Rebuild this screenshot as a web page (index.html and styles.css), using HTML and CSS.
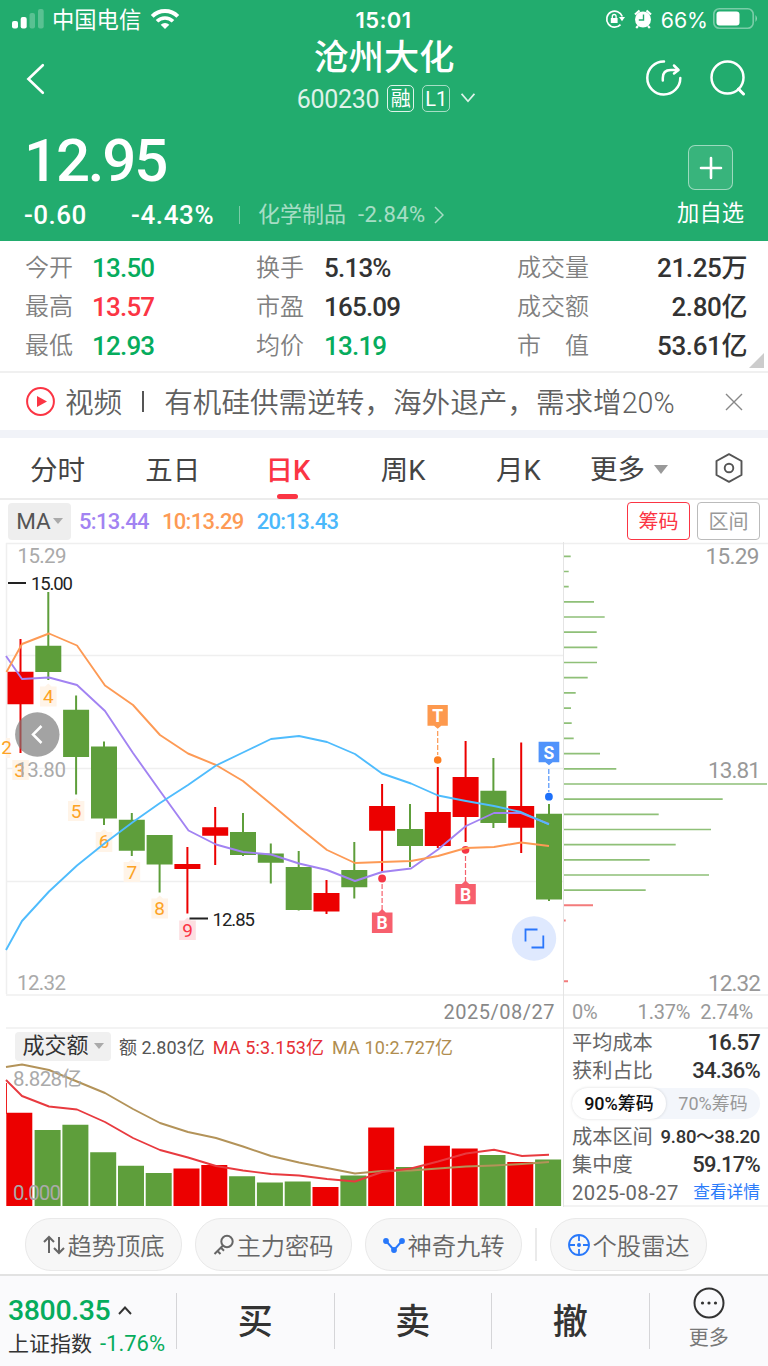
FILE: index.html
```
<!DOCTYPE html>
<html lang="zh-CN">
<head>
    <meta charset="UTF-8">
    <meta name="viewport" content="width=device-width, initial-scale=1.0">
    <title>沧州大化 600230</title>
    <link rel="stylesheet" href="styles.css">
</head>
<body>
    <header class="header">
        <div class="status">
            <div class="status-left">
                <svg width="32" height="20" viewBox="0 0 32 20" fill="#fff">
                    <rect x="0" y="12" width="6" height="7.5" rx="2"/>
                    <rect x="8.7" y="8" width="6" height="11.5" rx="2"/>
                    <rect x="17.5" y="4" width="5.5" height="15.5" rx="2" opacity=".25"/>
                    <rect x="26" y="0" width="5.7" height="19.5" rx="2" opacity=".25"/>
                </svg>
                <span class="carrier">中国电信</span>
                <svg width="30" height="22" viewBox="0 0 30 22" fill="none" stroke="#fff" stroke-width="4">
                    <path d="M2.2 8.3a18 18 0 0 1 25.6 0"/>
                    <path d="M7 13.3a11.3 11.3 0 0 1 16 0" stroke-width="3.6"/>
                    <path d="M15 21l-4.3-4.2a6.2 6.2 0 0 1 8.6 0z" fill="#fff" stroke="none"/>
                </svg>
            </div>
            <span class="clock">15:01</span>
            <div class="status-right">
                <svg width="20" height="20" viewBox="0 0 20 20" fill="none" stroke="#fff" stroke-width="1.7">
                    <path d="M17.3 7.5A8 8 0 1 0 15.5 15.7"/>
                    <path d="M14 8h6L17 12.2z" fill="#fff" stroke="none"/>
                    <path d="M5.8 9h6.8v5H5.8z" fill="#fff" stroke="none"/>
                    <path d="M7.3 9V7.4a1.9 1.9 0 0 1 3.8 0V9" stroke-width="1.3"/>
                </svg>
                <svg class="alarm" width="18" height="20" viewBox="0 0 18 20">
                    <circle cx="9" cy="10.5" r="8" fill="#fff"/>
                    <path d="M1 5.5L5.5 1.5M17 5.5L12.5 1.5M4 17l-1.8 2M14 17l1.8 2" stroke="#fff" stroke-width="2.2"/>
                    <path d="M9.5 5.5V11H4.8" stroke="#22ac6e" stroke-width="1.4" fill="none"/>
                </svg>
                <span class="percent">66%</span>
                <svg width="46" height="22" viewBox="0 0 46 22">
                    <rect x=".8" y=".8" width="39.4" height="19.4" rx="5.5" fill="none" stroke="#fff" stroke-opacity=".4" stroke-width="1.6"/>
                    <rect x="3.5" y="3.5" width="23" height="14" rx="3" fill="#fff"/>
                    <path d="M42.5 7q3 3.5 0 7z" fill="#fff" opacity=".5"/>
                </svg>
            </div>
        </div>

        <div class="nav">
            <svg class="back" width="20" height="32" viewBox="0 0 20 32" fill="none" stroke="#fff" stroke-width="2.6" stroke-linecap="round">
                <path d="M16.8 2.2L2.4 16l14.4 13.8" stroke-linejoin="miter"/>
            </svg>
            <div class="title">
                <h1>沧州大化</h1>
                <div class="code">
                    <span class="code-num">600230</span>
                    <span class="tag">融</span>
                    <span class="tag tag-dim">L1</span>
                    <svg width="14" height="10" viewBox="0 0 14 10" fill="none" stroke="#fff" stroke-opacity=".85" stroke-width="1.7">
                        <path d="M.6 .8L7 8.3L13.4 .8"/>
                    </svg>
                </div>
            </div>
            <div class="nav-icons">
                <svg width="36" height="36" viewBox="0 0 36 36" fill="none" stroke="#fff" stroke-width="2.5" stroke-linecap="round" stroke-linejoin="round">
                    <path d="M18 1.5A16.5 16.5 0 1 0 34.3 18"/>
                    <path d="M16.8 20.5V18q0-8 8-8H32"/>
                    <path d="M28 5.5l4.5 4.5-4.5 3.5"/>
                </svg>
                <svg width="36" height="36" viewBox="0 0 36 36" fill="none" stroke="#fff" stroke-width="2.5" stroke-linecap="round">
                    <circle cx="17.5" cy="17.5" r="16"/>
                    <path d="M28.5 29l5 5" stroke-width="3"/>
                </svg>
            </div>
        </div>

        <div class="quote">
            <div class="quote-main">
                <div class="price">12.95</div>
                <div class="changes">
                    <span class="change">-0.60</span>
                    <span class="change-rate">-4.43%</span>
                    <span class="sector">化学制品</span>
                    <span class="sector-rate">-2.84%</span>
                    <svg width="10" height="18" viewBox="0 0 10 18" fill="none" stroke="#fff" stroke-opacity=".6" stroke-width="1.5">
                        <path d="M1 1l8 8-8 8"/>
                    </svg>
                </div>
            </div>
            <div class="add">
                <div class="add-box">
                    <svg width="24" height="24" viewBox="0 0 24 24" stroke="#fff" stroke-width="2.6" stroke-linecap="round">
                        <path d="M12 2v20M2 12h20"/>
                    </svg>
                </div>
                <span>加自选</span>
            </div>
        </div>
    </header>

    <section class="stats">
        <span>今开</span><b class="green">13.50</b><span>换手</span><b>5.13%</b><span>成交量</span><b class="last">21.25万</b>
        <span>最高</span><b class="red">13.57</b><span>市盈</span><b>165.09</b><span>成交额</span><b class="last">2.80亿</b>
        <span>最低</span><b class="green">12.93</b><span>均价</span><b class="green">13.19</b><span>市　值</span><b class="last">53.61亿</b>
        <i class="corner"></i>
    </section>

    <section class="news">
        <svg width="29" height="29" viewBox="0 0 29 29">
            <circle cx="14.5" cy="14.5" r="13.4" fill="none" stroke="#fb3544" stroke-width="2"/>
            <path d="M11 9l10 5.5-10 5.5z" fill="#fb3544"/>
        </svg>
        <span class="news-type">视频</span>
        <i class="news-bar"></i>
        <span class="news-text">有机硅供需逆转，海外退产，需求增20%</span>
        <svg width="18" height="18" viewBox="0 0 18 18" stroke="#888" stroke-width="1.4">
            <path d="M1 1l16 16M17 1L1 17"/>
        </svg>
    </section>

    <nav class="tabs">
        <span class="tab">分时</span>
        <span class="tab">五日</span>
        <span class="tab active">日K</span>
        <span class="tab">周K</span>
        <span class="tab">月K</span>
        <span class="tab-more">更多<i class="caret"></i></span>
        <svg width="28" height="30" viewBox="0 0 28 30" fill="none" stroke="#555" stroke-width="1.9" stroke-linejoin="round">
            <path d="M14 1.2L26.5 8v14L14 28.8 1.5 22V8z"/>
            <circle cx="14" cy="15" r="4.3"/>
        </svg>
    </nav>

    <div class="ma-row">
        <span class="ma-select">MA<i class="caret small"></i></span>
        <span class="ma purple">5:13.44</span>
        <span class="ma orange">10:13.29</span>
        <span class="ma blue">20:13.43</span>
        <span class="btn btn-on">筹码</span>
        <span class="btn">区间</span>
    </div>

    <main class="charts">
        <div class="left">
            <!-- candles -->
            <svg class="kline" width="563" height="452" viewBox="0 542 563 452">
                <path class="grid" d="M6 543.5H563M6 655.5H563M6 768.5H563M6 881.5H563M6.5 543V994"/>
                <g class="axis">
                    <text x="17.5" y="563" textLength="49">15.29</text>
                    <text x="17" y="989.5" textLength="49">12.32</text>
                </g>
                <g class="nine">
                    <path d="M6 738h4v20h-4zM12.3 760h16.5v20h-16.5zM40 686.5h5l3.3-3 3.3 3h5v20H40zM68 801h5l3.2-3 3.2 3h5v20H68zM95.7 832h5l3.3-3 3.3 3h5v20H95.7zM123.6 862h5l3.3-3 3.3 3h5v20h-16.6zM151.4 898.5h5l3.3-3 3.3 3h5v20h-16.6z"/>
                    <path class="nine-last" d="M179.2 920.5h5l3.3-3 3.3 3h5v19.5h-16.6z"/>
                    <text x="6.5" y="754">2</text>
                    <text x="19.5" y="776.5">3</text>
                    <text x="48.3" y="703">4</text>
                    <text x="76.2" y="817.5">5</text>
                    <text x="104" y="848">6</text>
                    <text x="131.9" y="878.5">7</text>
                    <text x="159.6" y="915">8</text>
                    <text class="nine-red" x="187.5" y="936.5">9</text>
                </g>
                <g class="axis"><text x="16" y="776.5" textLength="50">13.80</text></g>

                <path class="wick up" d="M20.5 639V753M187.4 847V913.5M215.2 807V865M326.5 880V914M382.1 784V872M437.8 767V848M465.6 741V842M521.2 742.5V853"/>
                <path class="body up" d="M20.5 671.8V704.3M187.4 864V869M215.2 827.3V835.7M326.5 893V911.5M382.1 806V830.8M437.8 812V846M465.6 777V817M521.2 806V827.7"/>
                <path class="wick down" d="M48.3 592V680M76.1 695.5V794.5M104 741.5V825M131.8 813V856M159.6 835V892.5M243 813V856M270.8 843.5V883.5M298.7 851V910.5M354.3 842V898.5M410 804V867M493.4 758V828M549 804V901"/>
                <path class="body down" d="M48.3 645.8V672M76.1 709.7V757M104 746.5V818.5M131.8 819.8V850.7M159.6 835V864.5M243 832V855M270.8 853.5V862.8M298.7 867V910M354.3 870V887.3M410 829V846M493.4 790.7V823M549 813.7V899.5"/>

                <g class="signal">
                    <path d="M437.7 731V755" stroke="#fc964e"/>
                    <path d="M548.8 769V792" stroke="#5093fb"/>
                    <path d="M382.1 884V910M465.5 856V882" stroke="#f5606c"/>
                    <circle cx="437.7" cy="760" r="3.8" fill="#fc7d20"/>
                    <circle cx="548.9" cy="796.7" r="3.9" fill="#1d70fa"/>
                    <circle cx="382.1" cy="878.5" r="3.9" fill="#f53545"/>
                    <circle cx="465.5" cy="849.8" r="3.9" fill="#f53545"/>
                    <path d="M427.5 705h20.3v20.7h-6.5l-3.6 3-3.6-3h-6.6z" fill="#fd994e"/>
                    <path d="M538.6 741.7h20.7v20.6h-6.7l-3.6 3-3.6-3h-6.8z" fill="#5093fb"/>
                    <path d="M371.9 912.5h6.5l3.7-3.5 3.7 3.5h6.7V933h-20.6zM455.3 884h6.5l3.7-3.5 3.7 3.5h6.6v20.3h-20.5z" fill="#f75f6d"/>
                    <text x="437.7" y="721.5">T</text>
                    <text x="549" y="758.5">S</text>
                    <text x="382.2" y="929">B</text>
                    <text x="465.6" y="900.5">B</text>
                </g>

                <polyline class="line purple-line" points="6,656 22,679 49,677.5 77,685 105,711 133,753 160,791 188.5,830.5 216,844.5 243,852 271,854.5 299,863.5 327,870 355,881 382,872 411,868.5 438,849.5 466,826 494,813 521,813 549,824"/>
                <polyline class="line orange-line" points="6.5,672 22,644 49,633.5 77,645.5 105,685.5 133,705 160,735 188,753.5 216,765 243,781 271,804 299,827.5 327,850 355,863 382,862 411,861 438,856 466,848 494,847 521,842.5 549,846"/>
                <polyline class="line blue-line" points="6,950 22,921 49,891.5 77,865.5 105,843 133,822 160,803 188,785 216,765.5 243,752.5 271,739 299,736 327,742 355,754 382,773.5 411,783.5 438,795.5 466,801 494,806 521,812 549,824.5"/>

                <g class="extreme">
                    <path d="M8 583H26M189.5 918.5H208"/>
                    <text x="31" y="590" textLength="42">15.00</text>
                    <text x="212.5" y="925.5" textLength="42.5">12.85</text>
                </g>

                <circle cx="37.3" cy="734.5" r="22.2" fill="#777" fill-opacity=".68"/>
                <path d="M41.5 726L33 734.5l8.5 8.5" fill="none" stroke="#fff" stroke-width="2.5"/>
                <circle cx="534" cy="938.5" r="22.2" fill="#dfe9fe"/>
                <path d="M525.5 941.5V929.5H537.5M543.3 935.5V947.5H531.5" fill="none" stroke="#2a76fb" stroke-width="1.8"/>
            </svg>

            <div class="date-row">2025/08/27</div>

            <div class="vol-head">
                <span class="vol-select">成交额<i class="caret small"></i></span>
                <span class="vol-now">额 2.803亿</span>
                <span class="vol-ma5">MA 5:3.153亿</span>
                <span class="vol-ma10">MA 10:2.727亿</span>
            </div>

            <svg class="volume" width="563" height="144" viewBox="0 1063 563 144">
                <path class="body up" d="M19.3 1206V1112.8M186.5 1206V1168.5M214.3 1206V1165M325.5 1206V1187M381.2 1206V1127.5M436.9 1206V1145.7M464.7 1206V1148.5M520.3 1206V1162"/>
                <path class="body down" d="M47.6 1206V1130M75.4 1206V1124.7M103.2 1206V1152.3M131 1206V1165.7M158.7 1206V1173M242.1 1206V1176.3M269.9 1206V1182.5M297.7 1206V1181.5M353.4 1206V1175.5M409 1206V1167M492.5 1206V1155M548.1 1206V1159.5"/>
                <path d="M6.5 1083V1114" stroke="#ee2020"/>
                <polyline class="line vol-tan" points="6,1067 22,1064.5 49,1070 77,1081.5 105,1093 133,1109 160,1123 188,1132 216,1138 243,1146.5 271,1156 299,1162.5 327,1168 355,1173.5 382,1171 411,1170.5 438,1168.5 466,1166.5 494,1165.5 522,1164 549,1162"/>
                <polyline class="line vol-red" points="6,1080 22,1096 49,1106.5 77,1109.5 105,1122 133,1138 160,1150 188,1157.5 216,1166 243,1170.5 271,1174 299,1175.5 327,1179 355,1181.5 382,1172 411,1168.5 438,1161.5 466,1153.5 494,1149.8 522,1156 549,1154.8"/>
                <g class="axis">
                    <text x="13" y="1086" textLength="69">8.828亿</text>
                    <text x="13" y="1199.5" textLength="48">0.000</text>
                </g>
            </svg>
        </div>

        <div class="right">
            <!-- chip distribution -->
            <svg class="chips" width="204" height="452" viewBox="564 542 204 452">
                <path class="grid" d="M564 543.5H768"/>
                <path class="chip-green" d="M564 556.3h6.7M564 571.5h4.7M564 586.7h4.7M564 601.9h30M564 617h40.7M564 632.2h32.7M564 647.4h33.3M564 662.5h33M564 677.7h23.7M564 692.9h11.7M564 708.1h7M564 723.2h7.7M564 738.4h9.7M564 753.6h36M564 768.8h52.3M564 784h203M564 799.1h158.7M564 814.3h94.7M564 829.5h147M564 844.7h111.7M564 859.8h85.7M564 875h145M564 890.2h81.7"/>
                <path class="chip-red" d="M564 905.3h29M564 920.5h1.7M564 981.2h4"/>
                <g class="axis axis-big">
                    <text x="705.5" y="564" textLength="54">15.29</text>
                    <text x="708" y="777.5" textLength="53">13.81</text>
                    <text x="708" y="990.5" textLength="53">12.32</text>
                </g>
            </svg>
            <div class="pct-row"><span>0%</span><span>1.37%</span><span>2.74%</span></div>
            <div class="info">
                <div class="info-row"><span>平均成本</span><b>16.57</b></div>
                <div class="info-row"><span>获利占比</span><b>34.36%</b></div>
                <div class="toggle"><span class="on">90%筹码</span><span>70%筹码</span></div>
                <div class="info-row"><span>成本区间</span><b class="range">9.80～38.20</b></div>
                <div class="info-row"><span>集中度</span><b>59.17%</b></div>
                <div class="info-row"><span class="info-date">2025-08-27</span><a>查看详情</a></div>
            </div>
        </div>
    </main>

    <div class="pills">
        <span class="pill">
            <svg width="24" height="24" viewBox="0 0 24 24" fill="none" stroke="#666" stroke-width="2">
                <path d="M7 20V4M2 9l5-5 5 5M17 4v16M12 15l5 5 5-5"/>
            </svg>趋势顶底</span>
        <span class="pill">
            <svg width="22" height="24" viewBox="0 0 22 24" fill="none" stroke="#666" stroke-width="2">
                <circle cx="14" cy="8.5" r="5.7"/>
                <path d="M10 12.5L1.5 21M4.5 18l3 3M8 14.8l3 3"/>
            </svg>主力密码</span>
        <span class="pill">
            <svg width="24" height="24" viewBox="0 0 24 24" fill="#2878fa" stroke="#2878fa" stroke-width="2">
                <path d="M4 8l8 9 8-9" fill="none"/>
                <circle cx="4" cy="8" r="1.9"/><circle cx="12" cy="17" r="1.9"/><circle cx="20" cy="8" r="1.9"/>
            </svg>神奇九转</span>
        <i class="pill-sep"></i>
        <span class="pill">
            <svg width="24" height="24" viewBox="0 0 24 24" fill="none" stroke="#2878fa" stroke-width="1.8">
                <circle cx="12" cy="12" r="10"/>
                <path d="M12 2v6M12 16v6M2 12h6M16 12h6"/>
                <circle cx="12" cy="12" r="2" fill="#2878fa" stroke="none"/>
            </svg>个股雷达</span>
    </div>

    <footer class="footer">
        <div class="index">
            <div class="index-value">3800.35
                <svg width="14" height="9" viewBox="0 0 14 9" fill="none" stroke="#333" stroke-width="1.9"><path d="M1 8l6-6.5L13 8"/></svg>
            </div>
            <div class="index-name">上证指数<span class="index-rate green">-1.76%</span></div>
        </div>
        <div class="trade">买</div>
        <div class="trade">卖</div>
        <div class="trade">撤</div>
        <div class="more">
            <svg width="32" height="32" viewBox="0 0 32 32" fill="#333">
                <circle cx="16" cy="16" r="14.5" fill="none" stroke="#333" stroke-width="2"/>
                <circle cx="9.5" cy="16" r="1.6"/><circle cx="16" cy="16" r="1.6"/><circle cx="22.5" cy="16" r="1.6"/>
            </svg>
            <span>更多</span>
        </div>
    </footer>
</body>
</html>
```
FILE: styles.css
```
* {
    box-sizing: border-box;
}

body {
    margin: 0;
    width: 768px;
    height: 1366px;
    overflow: hidden;
    background: #fff;
    color: #333;
    font-family: Roboto, "Noto Sans CJK SC", sans-serif;
    white-space: nowrap;
}

svg {
    display: block;
    flex: none;
}

i {
    flex: none;
}

.green { color: #06ac5d; }
.red { color: #fb3544; }

/* header */
.header {
    height: 241px;
    background: #22ac6e;
    color: #fff;
}

.status {
    display: grid;
    grid-template-columns: 1fr 60px 1fr;
    align-items: center;
    height: 38px;
    padding: 0 9px 0 12px;
}

.status-left,
.status-right {
    display: flex;
    align-items: center;
}

.status-right {
    justify-content: flex-end;
}

.carrier {
    margin: 1px 9px 0 8px;
    font-size: 22.3px;
    line-height: 30px;
}

.clock,
.percent {
    font-family: Inter, sans-serif;
    font-size: 22px;
}

.clock {
    margin: 1px 2px 0 -2px;
    font-weight: 600;
    text-align: center;
    letter-spacing: .4px;
}

.alarm {
    margin: 0 9px 0 9px;
}

.percent {
    margin: 1px 5px 0 0;
    font-size: 21.3px;
}

.nav {
    display: grid;
    grid-template-columns: 150px 1fr 150px;
    height: 82px;
    padding: 0 22px 0 26px;
}

.back {
    margin-top: 25px;
}

.title {
    text-align: center;
}

h1 {
    margin: 0 2px 0 -2px;
    font-size: 35.2px;
    font-weight: 500;
    line-height: 40px;
}

.code {
    display: flex;
    align-items: center;
    justify-content: center;
    gap: 8px;
    margin-top: 6px;
    height: 28px;
}

.code-num {
    padding-top: 3px;
    font-size: 25px;
    letter-spacing: -.3px;
    opacity: .85;
}

.tag {
    width: 27px;
    height: 27px;
    border: 1.5px solid rgba(255, 255, 255, .85);
    border-radius: 5px;
    font-size: 20px;
    line-height: 26px;
    text-align: center;
}

.tag-dim {
    border-color: rgba(255, 255, 255, .6);
    width: 28px;
}

.code svg {
    margin-left: 3px;
}

.nav-icons {
    display: flex;
    justify-content: flex-end;
    gap: 28px;
    padding-top: 22px;
}

.quote {
    display: flex;
    justify-content: space-between;
    height: 121px;
    padding: 0 24px;
}

.price {
    height: 78px;
    font-size: 60px;
    font-weight: 500;
    line-height: 82px;
    letter-spacing: -2.2px;
}

.changes {
    display: flex;
    align-items: center;
    height: 34px;
    font-size: 26px;
    font-weight: 500;
}

.change {
    width: 107px;
    letter-spacing: .5px;
}

.change-rate {
    width: 109px;
    letter-spacing: .6px;
    border-right: 1.5px solid rgba(255, 255, 255, .4);
    line-height: 18px;
}

.sector,
.sector-rate {
    font-size: 22px;
    font-weight: 400;
    opacity: .6;
}

.sector {
    margin: -6px 12px 0 18px;
}

.sector-rate {
    margin: -2px 8px 0 0;
    letter-spacing: .4px;
}

.add {
    display: flex;
    flex-direction: column;
    align-items: center;
    padding-top: 25px;
    font-size: 22.3px;
    line-height: 46px;
}

.add-box {
    display: flex;
    align-items: center;
    justify-content: center;
    width: 45px;
    height: 45px;
    border: 1.5px solid rgba(255, 255, 255, .5);
    border-radius: 7px;
    background: rgba(255, 255, 255, .1);
}

/* key figures */
.stats {
    position: relative;
    display: grid;
    grid-template-columns: 67px 164px 68px 193px 76px 1fr;
    grid-auto-rows: 39px;
    align-items: center;
    height: 132px;
    padding: 8px 21px 0 25px;
    border-bottom: 2px solid #f0f0f0;
    font-size: 24px;
    line-height: 39px;
}

.stats span {
    color: #808080;
    font-weight: 350;
}

.stats b {
    font-size: 26px;
    font-weight: 500;
    letter-spacing: -.8px;
}

.stats .last {
    text-align: right;
    letter-spacing: -.4px;
}

.corner {
    position: absolute;
    right: 4px;
    bottom: 3px;
    border-bottom: 15px solid #ccc;
    border-left: 15px solid transparent;
}

.news {
    display: flex;
    align-items: center;
    height: 65px;
    padding: 0 25px 0 26px;
    border-bottom: 8px solid #f1f3f8;
    color: #606060;
    font-size: 28.6px;
    font-weight: 350;
    line-height: 40px;
}

.news span {
    padding-top: 2px;
}

.news-type {
    margin-left: 10px;
}

.news-bar {
    width: 2px;
    height: 21px;
    margin: 0 20px 0 20px;
    background: #555;
}

.news-text {
    flex: 1;
}

/* period tabs */
.tabs {
    display: flex;
    align-items: center;
    height: 62px;
    border-bottom: 2px solid #ececec;
    font-size: 27.5px;
    color: #444;
}

.tab {
    width: 115.2px;
    height: 61px;
    line-height: 66px;
    text-align: center;
}

.active {
    display: flex;
    flex-direction: column;
    align-items: center;
    color: #fb3544;
    font-weight: 500;
}

.active::after {
    content: "";
    width: 21px;
    height: 5px;
    margin-top: -10px;
    border-radius: 3px;
    background: #fb3544;
}

.tab-more {
    display: flex;
    align-items: center;
    width: 125px;
    margin-left: 14px;
    padding-top: 3px;
    line-height: 64px;
}

.caret {
    margin-left: 9px;
    border: 7px solid transparent;
    border-top: 9px solid #999;
    border-bottom: 0;
}

.caret.small {
    margin-left: 2px;
    border-width: 5px;
    border-top-width: 6px;
    border-bottom: 0;
    border-top-color: #aaa;
}

.ma-row {
    display: flex;
    align-items: center;
    height: 42px;
    padding: 0 8px;
    font-size: 22.5px;
}

.ma-select {
    display: flex;
    align-items: center;
    justify-content: center;
    width: 63px;
    height: 37px;
    margin-right: 8px;
    border-radius: 4px;
    background: #eee;
    color: #555;
}

.ma {
    margin-right: 13px;
    font-size: 22px;
    font-weight: 500;
    letter-spacing: -.65px;
}

.purple { color: #a283f2; }
.orange { color: #fd9a55; }
.blue { color: #4bb8fb; }

.btn {
    width: 63px;
    height: 38px;
    border: 1.5px solid #bbb;
    border-radius: 4px;
    color: #999;
    font-size: 20px;
    line-height: 38px;
    text-align: center;
}

.btn-on {
    margin: 0 7px 0 auto;
    border-color: #fb3544;
    color: #fb3544;
}

/* charts */
.charts {
    display: grid;
    grid-template-columns: 564px 204px;
    height: 665px;
}

.left {
    border-right: 1px solid #e4e4e4;
}

.grid {
    fill: none;
    stroke: #efefef;
    stroke-width: 1.5;
}

.axis {
    fill: #aaa;
    font-size: 20.5px;
}

.axis-big {
    fill: #999;
    font-size: 22.5px;
}

.up { stroke: #ec0000; }
.down { stroke: #5e9e3b; }

.wick { stroke-width: 2; }
.body { stroke-width: 26; }

.line {
    fill: none;
    stroke-width: 1.9;
    stroke-linejoin: round;
}

.purple-line { stroke: #a283f2; }
.orange-line { stroke: #fd9a55; }
.blue-line { stroke: #4fbcfd; }
.vol-red { stroke: #e83a3f; }
.vol-tan { stroke: #b39359; }

.nine {
    fill: #fff4e8;
    font-size: 19px;
    text-anchor: middle;
}

.nine text { fill: #fda325; }
.nine .nine-last { fill: #fddfe1; }
.nine .nine-red { fill: #fb3544; }

.signal path {
    stroke-dasharray: 5 2;
    stroke-width: 1.2;
}

.signal text {
    fill: #fff;
    font-size: 17.5px;
    font-weight: 700;
    text-anchor: middle;
}

.extreme {
    fill: #222;
    stroke: none;
    font-size: 18.5px;
}

.extreme path {
    stroke: #222;
    stroke-width: 1.8;
}

.date-row,
.pct-row {
    height: 35px;
    border-top: 2px solid #f3f3f3;
    border-bottom: 2px solid #f3f3f3;
    color: #888;
    font-size: 20px;
    line-height: 33px;
}

.date-row {
    margin-left: 6px;
    padding-right: 8px;
    text-align: right;
    letter-spacing: .5px;
}

.vol-head {
    display: flex;
    align-items: center;
    height: 34px;
    margin-left: 15px;
    font-size: 18px;
}

.vol-select {
    display: flex;
    align-items: center;
    justify-content: center;
    width: 96px;
    height: 29px;
    margin-right: 8px;
    border-radius: 4px;
    background: #f0f0f0;
    font-size: 22px;
    line-height: 26px;
}

.vol-select .caret {
    margin-left: 5px;
}

.vol-now { color: #555; margin-right: 8px; }
.vol-ma5 { color: #e52f35; margin-right: 8px; letter-spacing: .15px; }
.vol-ma10 { color: #b08d4f; letter-spacing: .1px; }

.chip-green { stroke: #8fc078; stroke-width: 1.7; }
.chip-red { stroke: #f37b7b; stroke-width: 1.9; }

.pct-row {
    display: flex;
    justify-content: space-between;
    padding: 0 15px 0 8px;
    color: #999;
}

.pct-row span {
    letter-spacing: -.2px;
}

.pct-row span:nth-child(2) {
    margin-left: 30px;
}

.info {
    height: 178px;
    padding: 0 8px;
    border-bottom: 2px solid #f3f3f3;
}

.info-row {
    display: flex;
    align-items: center;
    justify-content: space-between;
    height: 28px;
    color: #666;
    font-size: 20.2px;
    line-height: 28px;
}

.info-row b {
    color: #333;
    font-size: 22px;
    font-weight: 500;
    letter-spacing: -.75px;
}

.info-row .range {
    font-size: 18.5px;
    letter-spacing: -.3px;
}

.info-row a {
    color: #2b7bfa;
    font-size: 16.7px;
}

.info-date {
    letter-spacing: .5px;
}

.toggle {
    display: flex;
    height: 31px;
    margin: 3px 0 4px;
    border-radius: 16px;
    background: #f3f6fb;
    color: #999;
    font-size: 18px;
    line-height: 32px;
    text-align: center;
}

.toggle span {
    flex: 1;
}

.toggle .on {
    border-radius: 16px;
    background: #fff;
    box-shadow: 0 0 3px rgba(0, 0, 0, .15);
    color: #111;
    font-weight: 500;
}

/* bottom */
.pills {
    display: flex;
    align-items: center;
    gap: 13px;
    height: 67px;
    padding: 9px 0 1px 25px;
}

.pill {
    display: flex;
    align-items: center;
    justify-content: center;
    gap: 1px;
    width: 157px;
    height: 53px;
    border: 1.5px solid #e9e9e9;
    border-radius: 26px;
    background: #f7f7f7;
    color: #666;
    font-size: 24.3px;
    font-weight: 350;
}

.pill-sep {
    width: 2px;
    height: 33px;
    background: #eaeaea;
}

.footer {
    display: flex;
    align-items: center;
    height: 92px;
    border-top: 2px solid #e2e2e2;
    background: #fafafc;
}

.index {
    width: 177px;
    height: 56px;
    padding-left: 8px;
    border-right: 1.5px solid #d5d5d8;
}

.index-value {
    display: flex;
    align-items: center;
    gap: 8px;
    height: 34px;
    color: #06ac5d;
    font-size: 28.5px;
    font-weight: 500;
    letter-spacing: -.4px;
}

.index-name {
    font-size: 21px;
    line-height: 34px;
}

.index-rate {
    margin-left: 8px;
    font-size: 22px;
}

.trade {
    width: 157.5px;
    height: 56px;
    border-right: 1.5px solid #d5d5d8;
    font-size: 35px;
    font-weight: 500;
    line-height: 60px;
    text-align: center;
}

.more {
    display: flex;
    flex: 1;
    flex-direction: column;
    align-items: center;
    padding-top: 2px;
    color: #777;
    font-size: 20px;
    line-height: 38px;
}
```
